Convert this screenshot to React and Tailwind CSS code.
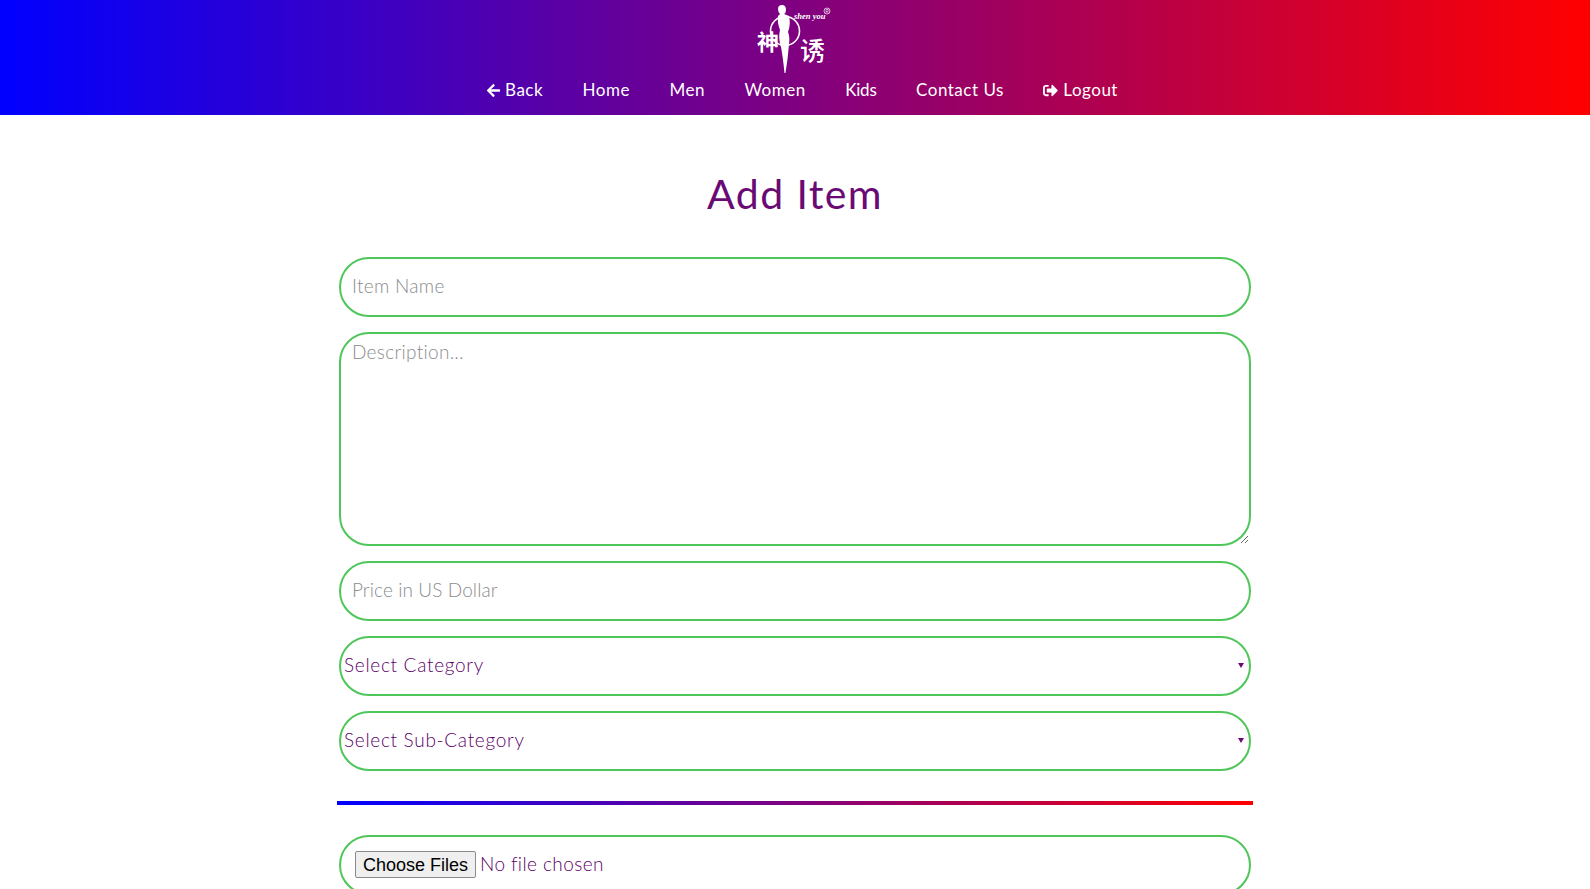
import { FaArrowLeft, FaSignOutAlt } from "react-icons/fa";

const fieldClass =
  "block w-[912px] mx-auto border-2 border-[#4fc65a] rounded-[30px] text-[#5c0068] bg-white outline-none";

function Logo() {
  return (
    <svg width="90" height="75" viewBox="750 0 90 75" className="block">
      {/* dancer and hoop */}
      <circle cx="785" cy="31" r="14.5" fill="none" stroke="#fff" strokeWidth="1.6" />
      <path
        d="M778 9Q778 5 782 5Q786 5 786 10Q786 13 784 14L789 16Q791 24 788 32Q790 37 789 44Q788 58 785.5 73L784.5 73Q783 58 781 47Q778 38 780 30Q777 22 778 16L780 14Q778 12 778 9Z"
        fill="#fff"
      />
      <text x="757" y="50" fontSize="22" fontWeight="700" fill="#fff" fontFamily="'Noto Sans CJK SC', sans-serif">神</text>
      <text x="800" y="60" fontSize="25" fontWeight="500" fill="#fff" fontFamily="'Noto Sans CJK SC', sans-serif">诱</text>
      <text x="794" y="19" fontSize="8.5" fontStyle="italic" fontWeight="700" fill="#fff" fontFamily="'Liberation Serif', serif">shen you</text>
      <circle cx="827" cy="11" r="3" fill="none" stroke="#fff" strokeWidth="0.7" />
      <text x="825.4" y="13" fontSize="4.5" fill="#fff" fontFamily="'Liberation Sans', sans-serif">R</text>
    </svg>
  );
}

function SelectField({ label }) {
  return (
    <div className="relative w-[912px] mx-auto">
      <select className={`${fieldClass} appearance-none h-[60px] pl-[3px] pb-[1px] text-[19px] font-light tracking-[0.7px]`}>
        <option>{label}</option>
      </select>
      {/* arrow */}
      <svg width="6" height="5" viewBox="0 0 6 5" className="absolute right-[7px] top-[27px]">
        <path d="M0 0H6L3 5Z" fill="#6a0b75" />
      </svg>
    </div>
  );
}

export default function App() {
  return (
    <div className="h-[889px] overflow-hidden bg-white font-['Lato',sans-serif] text-[#6a0b75]">
      {/* Navbar */}
      <div className="h-[115px] bg-linear-to-r/srgb from-[#0000ff] to-[#ff0000] flex flex-col items-center">
        <Logo />
        <div className="flex items-center h-[30px] gap-[39.5px] text-white text-[17px] tracking-[0.5px] ml-[14px]">
          <a className="flex items-center gap-[4px]"><FaArrowLeft size={15} /> Back</a>
          <a>Home</a>
          <a>Men</a>
          <a>Women</a>
          <a className="tracking-[-0.2px]">Kids</a>
          <a>Contact Us</a>
          <a className="flex items-center gap-[5px]"><FaSignOutAlt size={15} /> Logout</a>
        </div>
      </div>

      <h1 className="text-center text-[41px] leading-[50px] mt-[54px] mb-[38px] tracking-[1.4px]">Add Item</h1>

      <div className="flex flex-col gap-[15px]">
        <input
          className={`${fieldClass} h-[60px] px-[11px] pb-[3px] text-[19px] font-light tracking-[0.3px] placeholder:text-[#8c8c8c]`}
          placeholder="Item Name"
        />
        <textarea
          className={`${fieldClass} h-[214px] px-[11px] py-[4px] text-[19px] font-light tracking-[0.3px] placeholder:text-[#8c8c8c]`}
          placeholder="Description..."
        />
        <input
          className={`${fieldClass} h-[60px] px-[11px] pb-[3px] text-[19px] font-light tracking-[0.1px] placeholder:text-[#8c8c8c]`}
          placeholder="Price in US Dollar"
        />
        <SelectField label="Select Category" />
        <SelectField label="Select Sub-Category" />
      </div>

      <div className="w-[916px] h-[4px] mx-auto my-[30px] bg-linear-to-r/srgb from-[#0000ff] to-[#ff0000]" />

      <div className={`${fieldClass} h-[60px] flex items-center px-[14px] pb-[2px]`}>
        <input
          type="file"
          multiple
          className="text-[19px] font-light tracking-[0.4px] text-[#5c0068] file:h-[27px] file:w-[121px] file:mr-[4px] file:bg-[#efefef] file:border file:border-[#8a8a8a] file:rounded-[2px] file:font-['Liberation_Sans',sans-serif] file:font-normal file:tracking-normal file:text-[18px] file:text-black"
        />
      </div>
    </div>
  );
}
